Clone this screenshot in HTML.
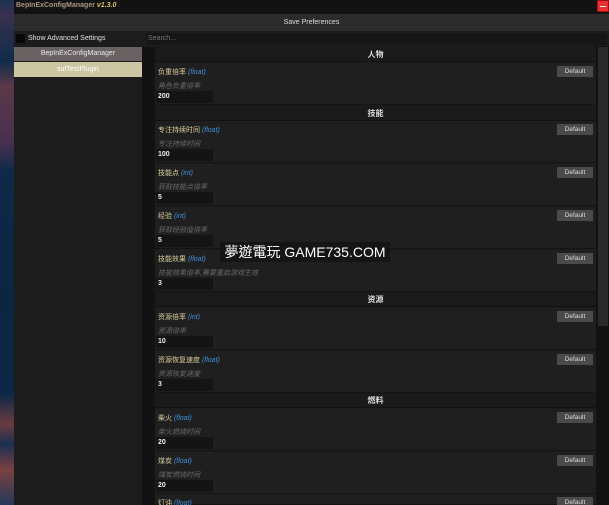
<!DOCTYPE html>
<html style="width:609px;height:505px;overflow:hidden"><head><meta charset="utf-8"><style>
*{margin:0;padding:0;box-sizing:border-box}
body{width:609px;height:505px;overflow:hidden;background:#1c1c1c;font-family:"Liberation Sans","Noto Sans CJK SC",sans-serif;font-size:7px;color:#ddd;position:relative}
.a{position:absolute}
.strip{left:0;top:0;width:14px;height:505px;background:linear-gradient(180deg,#1d3350 0%,#3a3050 3%,#0f2c4a 12%,#5a3848 17%,#4a3050 28%,#0e2a48 34%,#0c2642 60%,#0d2846 78%,#6a3a40 84%,#1a3050 88%,#7a4040 93%,#243a58 100%)}
.item{left:155px;width:441px;height:42px;background:#1f1f1f;border-bottom:1px solid #141414}
.item .t{position:absolute;left:3px;top:4px;color:#d8cf9a;font-size:7px}
.item .t i{color:#3f8fd8}
.item .d{position:absolute;left:3px;top:18px;color:#6a6a6a;font-style:italic;font-size:7px}
.item .v{position:absolute;left:1px;top:28px;width:57px;height:12px;background:#141414;color:#eee;font-size:7px;font-weight:bold;padding:2px 2px}
.item .b{position:absolute;left:402px;top:3px;width:36px;height:11px;background:#4a4a4a;color:#ddd;font-size:6.5px;text-align:center;line-height:11px}
.h{left:155px;width:441px;height:15px;background:#1a1a1a;border-bottom:1px solid #111;text-align:center;color:#ddd;font-size:8px;line-height:15px;font-weight:bold}
</style></head><body>
<div class="a strip"></div>
<div class="a" style="left:14px;top:0;width:595px;height:14px;background:#121212"></div>
<div class="a" style="left:16px;top:2px;font-size:7px;color:#a89880;font-weight:bold">BepInExConfigManager <i style="color:#d8c860">v1.3.0</i></div>
<div class="a" style="left:597px;top:0;width:12px;height:12px;background:#e83030;border:1px solid #a01010"><div class="a" style="left:2px;top:5px;width:6px;height:1px;background:#fff"></div></div>
<div class="a" style="left:14px;top:14px;width:595px;height:17px;background:#2c2c2c;text-align:center;line-height:17px;color:#ddd;font-size:7px">Save Preferences</div>
<div class="a" style="left:14px;top:31px;width:595px;height:15px;background:#1c1c1c"></div>
<div class="a" style="left:16px;top:34px;width:9px;height:9px;background:#080808"></div>
<div class="a" style="left:28px;top:35px;font-size:7px;color:#e0e0e0">Show Advanced Settings</div>
<div class="a" style="left:146px;top:33px;width:461px;height:12px;background:#161616;color:#777;font-size:7px;padding:2px 2px">Search...</div>
<div class="a" style="left:14px;top:47px;width:128px;height:14px;background:#6a6262;text-align:center;line-height:14px;color:#e8e8e8;font-size:7px">BepInExConfigManager</div>
<div class="a" style="left:14px;top:62px;width:128px;height:15px;background:#cdc6a2;text-align:center;line-height:15px;color:#fff;font-size:7px">sufTestPlugin</div>
<div class="a" style="left:142px;top:47px;width:13px;height:458px;background:#121212"></div>
<div class="a" style="left:596px;top:46px;width:13px;height:459px;background:#121212"></div>
<div class="a" style="left:598px;top:47px;width:10px;height:279px;background:#2a2a2a"></div>

<div class="a h" style="top:47px">人物</div>
<div class="a item" style="top:63px"><div class="t">负重倍率 <i>(float)</i></div><div class="d">角色负重倍率</div><div class="v">200</div><div class="b">Default</div></div>
<div class="a h" style="top:106px">技能</div>
<div class="a item" style="top:121px"><div class="t">专注持续时间 <i>(float)</i></div><div class="d">专注持续时间</div><div class="v">100</div><div class="b">Default</div></div>
<div class="a item" style="top:164px"><div class="t">技能点 <i>(int)</i></div><div class="d">获取技能点倍率</div><div class="v">5</div><div class="b">Default</div></div>
<div class="a item" style="top:207px"><div class="t">经验 <i>(int)</i></div><div class="d">获取经验值倍率</div><div class="v">5</div><div class="b">Default</div></div>
<div class="a item" style="top:250px"><div class="t">技能效果 <i>(float)</i></div><div class="d">技能效果倍率,需要重启游戏生效</div><div class="v">3</div><div class="b">Default</div></div>
<div class="a h" style="top:292px">资源</div>
<div class="a item" style="top:308px"><div class="t">资源倍率 <i>(int)</i></div><div class="d">资源倍率</div><div class="v">10</div><div class="b">Default</div></div>
<div class="a item" style="top:351px"><div class="t">资源恢复速度 <i>(float)</i></div><div class="d">资源恢复速度</div><div class="v">3</div><div class="b">Default</div></div>
<div class="a h" style="top:393px">燃料</div>
<div class="a item" style="top:409px"><div class="t">柴火 <i>(float)</i></div><div class="d">柴火燃烧时间</div><div class="v">20</div><div class="b">Default</div></div>
<div class="a item" style="top:452px"><div class="t">煤炭 <i>(float)</i></div><div class="d">煤炭燃烧时间</div><div class="v">20</div><div class="b">Default</div></div>
<div class="a item" style="top:494px;height:11px"><div class="t">灯油 <i>(float)</i></div><div class="b">Default</div></div>

<div class="a" style="left:220px;top:242px;width:170px;height:20px;background:rgba(20,20,20,0.85);color:#fff;font-size:14px;line-height:20px;text-align:center;font-family:'Liberation Sans','Noto Sans CJK TC',sans-serif">夢遊電玩 GAME735.COM</div>
</body></html>
